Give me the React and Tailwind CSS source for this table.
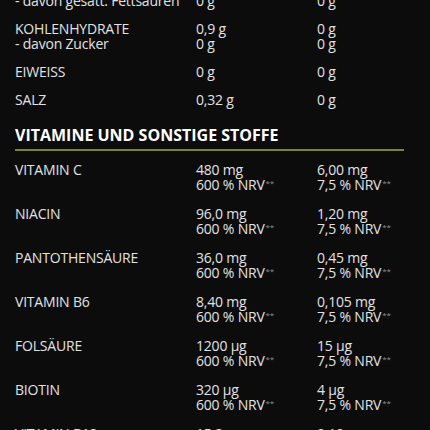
export default function App() {
  const macros = [
    [["- davon gesätt. Fettsäuren", "0 g", "0 g"]],
    [["KOHLENHYDRATE", "0,9 g", "0 g"], ["- davon Zucker", "0 g", "0 g"]],
    [["EIWEISS", "0 g", "0 g"]],
    [["SALZ", "0,32 g", "0 g"]],
  ];
  const vit = [
    ["VITAMIN C", "480 mg", "6,00 mg"],
    ["NIACIN", "96,0 mg", "1,20 mg"],
    ["PANTOTHENSÄURE", "36,0 mg", "0,45 mg"],
    ["VITAMIN B6", "8,40 mg", "0,105 mg"],
    ["FOLSÄURE", "1200 µg", "15 µg"],
    ["BIOTIN", "320 µg", "4 µg"],
    ["VITAMIN B12", "15,2 µg", "0,19 µg"],
  ];
  const Nrv = ({ v }) => (
    <div className="h-[15px] whitespace-nowrap">
      {v} % NRV
      <span className="relative -top-[4px] ml-[1px] text-[8px] leading-none text-[#8e8e8e]">**</span>
    </div>
  );
  return (
    <div
      className="w-[430px] h-[430px] overflow-hidden bg-[#0c0c0d] text-[#e2e2e2] text-[14px] tracking-[-0.2px] leading-[15px]"
      style={{ fontFamily: '"Open Sans", "Noto Sans", sans-serif' }}
    >
      <div className="pl-[15px] w-[404px] -mt-[7px] flex flex-col">
        <div className="flex flex-col gap-[13px]">
          {macros.map((g, i) => (
            <div key={i} className="flex flex-col">
              {g.map((r, j) => (
                <div key={j} className="grid grid-cols-[181px_121px_1fr] h-[15px]">
                  <div className="whitespace-nowrap">{r[0]}</div>
                  <div>{r[1]}</div>
                  <div>{r[2]}</div>
                </div>
              ))}
            </div>
          ))}
        </div>
        <div className="mt-[18px] text-white font-bold text-[16px] tracking-normal leading-[20px]">
          VITAMINE UND SONSTIGE STOFFE
        </div>
        <div className="mt-[4px] h-[2px] bg-[#7b8537]"></div>
        <div className="mt-[11px] flex flex-col gap-[14px]">
          {vit.map((r, i) => (
            <div key={i} className="grid grid-cols-[181px_121px_1fr] h-[30px]">
              <div>{r[0]}</div>
              <div>
                <div className="h-[15px]">{r[1]}</div>
                <Nrv v="600" />
              </div>
              <div>
                <div className="h-[15px]">{r[2]}</div>
                <Nrv v="7,5" />
              </div>
            </div>
          ))}
        </div>
      </div>
    </div>
  );
}
